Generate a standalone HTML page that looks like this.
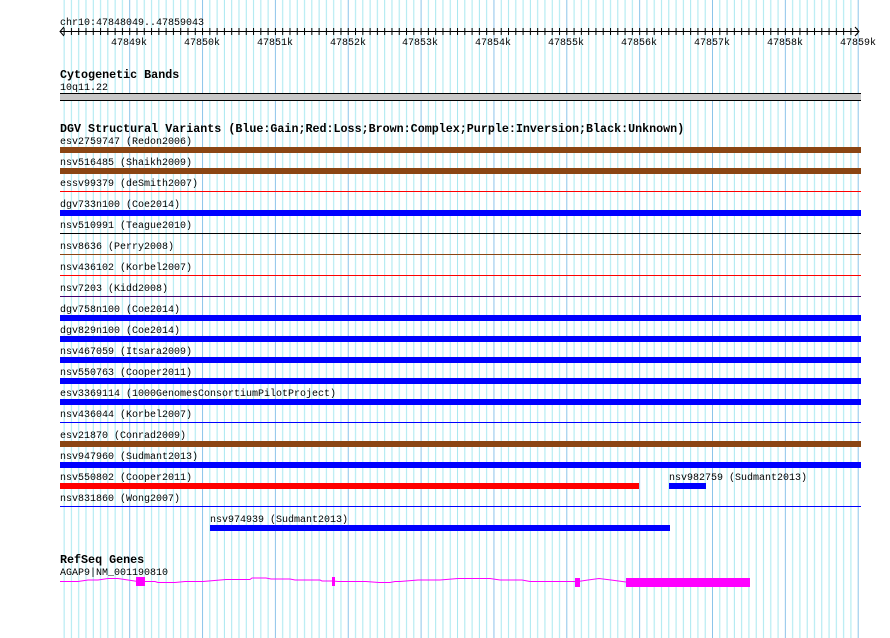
<!DOCTYPE html>
<html><head><meta charset="utf-8"><style>
body{margin:0;background:#fff;width:890px;height:638px;overflow:hidden}
svg{display:block}
text{font-family:"Liberation Mono",monospace;font-size:10px;fill:#000}
.b{font-weight:bold;font-size:11.7px}
</style></head><body>
<svg width="890" height="638" xmlns="http://www.w3.org/2000/svg">
<defs>
<pattern id="g" x="129.2" y="0" width="72.85" height="10" patternUnits="userSpaceOnUse">
<rect x="0" y="0" width="1" height="10" fill="#8cc4ea"/>
<rect x="7.285" width="1" height="10" fill="#a8e8f0"/>
<rect x="14.57" width="1" height="10" fill="#a8e8f0"/>
<rect x="21.855" width="1" height="10" fill="#a8e8f0"/>
<rect x="29.14" width="1" height="10" fill="#a8e8f0"/>
<rect x="36.425" width="1" height="10" fill="#a8e8f0"/>
<rect x="43.71" width="1" height="10" fill="#a8e8f0"/>
<rect x="50.995" width="1" height="10" fill="#a8e8f0"/>
<rect x="58.28" width="1" height="10" fill="#a8e8f0"/>
<rect x="65.565" width="1" height="10" fill="#a8e8f0"/>
</pattern>
<pattern id="t" x="129.2" y="0" width="7.285" height="10" patternUnits="userSpaceOnUse">
<rect x="0" y="0" width="1" height="10" fill="#000"/>
</pattern>
</defs>
<rect x="60" y="0" width="799" height="638" fill="url(#g)"/>
<!-- ruler -->
<rect x="60" y="31" width="799" height="1" fill="#000"/>
<rect x="62" y="28" width="796" height="7" fill="url(#t)"/>
<path d="M64 27 L60 31.5 L64 36 M855 27 L859 31.5 L855 36" stroke="#000" fill="none"/>
<text x="60" y="25">chr10:47848049..47859043</text>
<g text-anchor="middle">
<text x="129" y="45">47849k</text><text x="202" y="45">47850k</text><text x="275" y="45">47851k</text>
<text x="348" y="45">47852k</text><text x="420" y="45">47853k</text><text x="493" y="45">47854k</text>
<text x="566" y="45">47855k</text><text x="639" y="45">47856k</text><text x="712" y="45">47857k</text>
<text x="785" y="45">47858k</text><text x="858" y="45">47859k</text>
</g>
<text class="b" x="60" y="78">Cytogenetic Bands</text>
<text x="60" y="90">10q11.22</text>
<rect x="60" y="93" width="801" height="8" fill="#000"/>
<rect x="60" y="94" width="801" height="6" fill="#c8c8c8"/>
<text class="b" x="60" y="132">DGV Structural Variants (Blue:Gain;Red:Loss;Brown:Complex;Purple:Inversion;Black:Unknown)</text>
<!-- rows -->
<g>
<text x="60" y="144">esv2759747 (Redon2006)</text><rect x="60" y="147" width="801" height="6" fill="#8b4513"/>
<text x="60" y="165">nsv516485 (Shaikh2009)</text><rect x="60" y="168" width="801" height="6" fill="#8b4513"/>
<text x="60" y="186">essv99379 (deSmith2007)</text><rect x="60" y="191" width="801" height="1" fill="#f00"/>
<text x="60" y="207">dgv733n100 (Coe2014)</text><rect x="60" y="210" width="801" height="6" fill="#00f"/>
<text x="60" y="228">nsv510991 (Teague2010)</text><rect x="60" y="233" width="801" height="1" fill="#000"/>
<text x="60" y="249">nsv8636 (Perry2008)</text><rect x="60" y="254" width="801" height="1" fill="#8b4513"/>
<text x="60" y="270">nsv436102 (Korbel2007)</text><rect x="60" y="275" width="801" height="1" fill="#f00"/>
<text x="60" y="291">nsv7203 (Kidd2008)</text><rect x="60" y="296" width="801" height="1" fill="#400070"/>
<text x="60" y="312">dgv758n100 (Coe2014)</text><rect x="60" y="315" width="801" height="6" fill="#00f"/>
<text x="60" y="333">dgv829n100 (Coe2014)</text><rect x="60" y="336" width="801" height="6" fill="#00f"/>
<text x="60" y="354">nsv467059 (Itsara2009)</text><rect x="60" y="357" width="801" height="6" fill="#00f"/>
<text x="60" y="375">nsv550763 (Cooper2011)</text><rect x="60" y="378" width="801" height="6" fill="#00f"/>
<text x="60" y="396">esv3369114 (1000GenomesConsortiumPilotProject)</text><rect x="60" y="399" width="801" height="6" fill="#00f"/>
<text x="60" y="417">nsv436044 (Korbel2007)</text><rect x="60" y="422" width="801" height="1" fill="#00f"/>
<text x="60" y="438">esv21870 (Conrad2009)</text><rect x="60" y="441" width="801" height="6" fill="#8b4513"/>
<text x="60" y="459">nsv947960 (Sudmant2013)</text><rect x="60" y="462" width="801" height="6" fill="#00f"/>
<text x="60" y="480">nsv550802 (Cooper2011)</text><rect x="60" y="483" width="579" height="6" fill="#f00"/>
<text x="669" y="480">nsv982759 (Sudmant2013)</text><rect x="669" y="483" width="37" height="6" fill="#00f"/>
<text x="60" y="501">nsv831860 (Wong2007)</text><rect x="60" y="506" width="801" height="1" fill="#00f"/>
<text x="210" y="522">nsv974939 (Sudmant2013)</text><rect x="210" y="525" width="460" height="6" fill="#00f"/>
</g>
<text class="b" x="60" y="563">RefSeq Genes</text>
<text x="60" y="575">AGAP9|NM_001190810</text>
<polyline fill="none" stroke="#f0f" stroke-width="1" points="60,581.5 78,581.5 88,580 98,580 108,578.5 118,578.5 128,580 138,581.5 155,581.5 158,582.5 175,582.5 185,581.5 203,581.5 226,579.5 250,579.5 252,578 266,578 271,579 290,579 295,580 320,580 322,581 333,581 338,581.5 366,581.5 379,582.5 390,582.5 395,581.5 400,581.5 418,580 440,580 458,578.5 490,578.5 500,580 522,580 530,581.5 566,581.5 578,581.5 588,580 599,578.5 611,580 626,582"/>
<rect x="136" y="577" width="9" height="9" fill="#f0f"/>
<rect x="332" y="577" width="3" height="9" fill="#f0f"/>
<rect x="575" y="578" width="5" height="9" fill="#f0f"/>
<rect x="626" y="578" width="124" height="9" fill="#f0f"/>
</svg>
</body></html>
